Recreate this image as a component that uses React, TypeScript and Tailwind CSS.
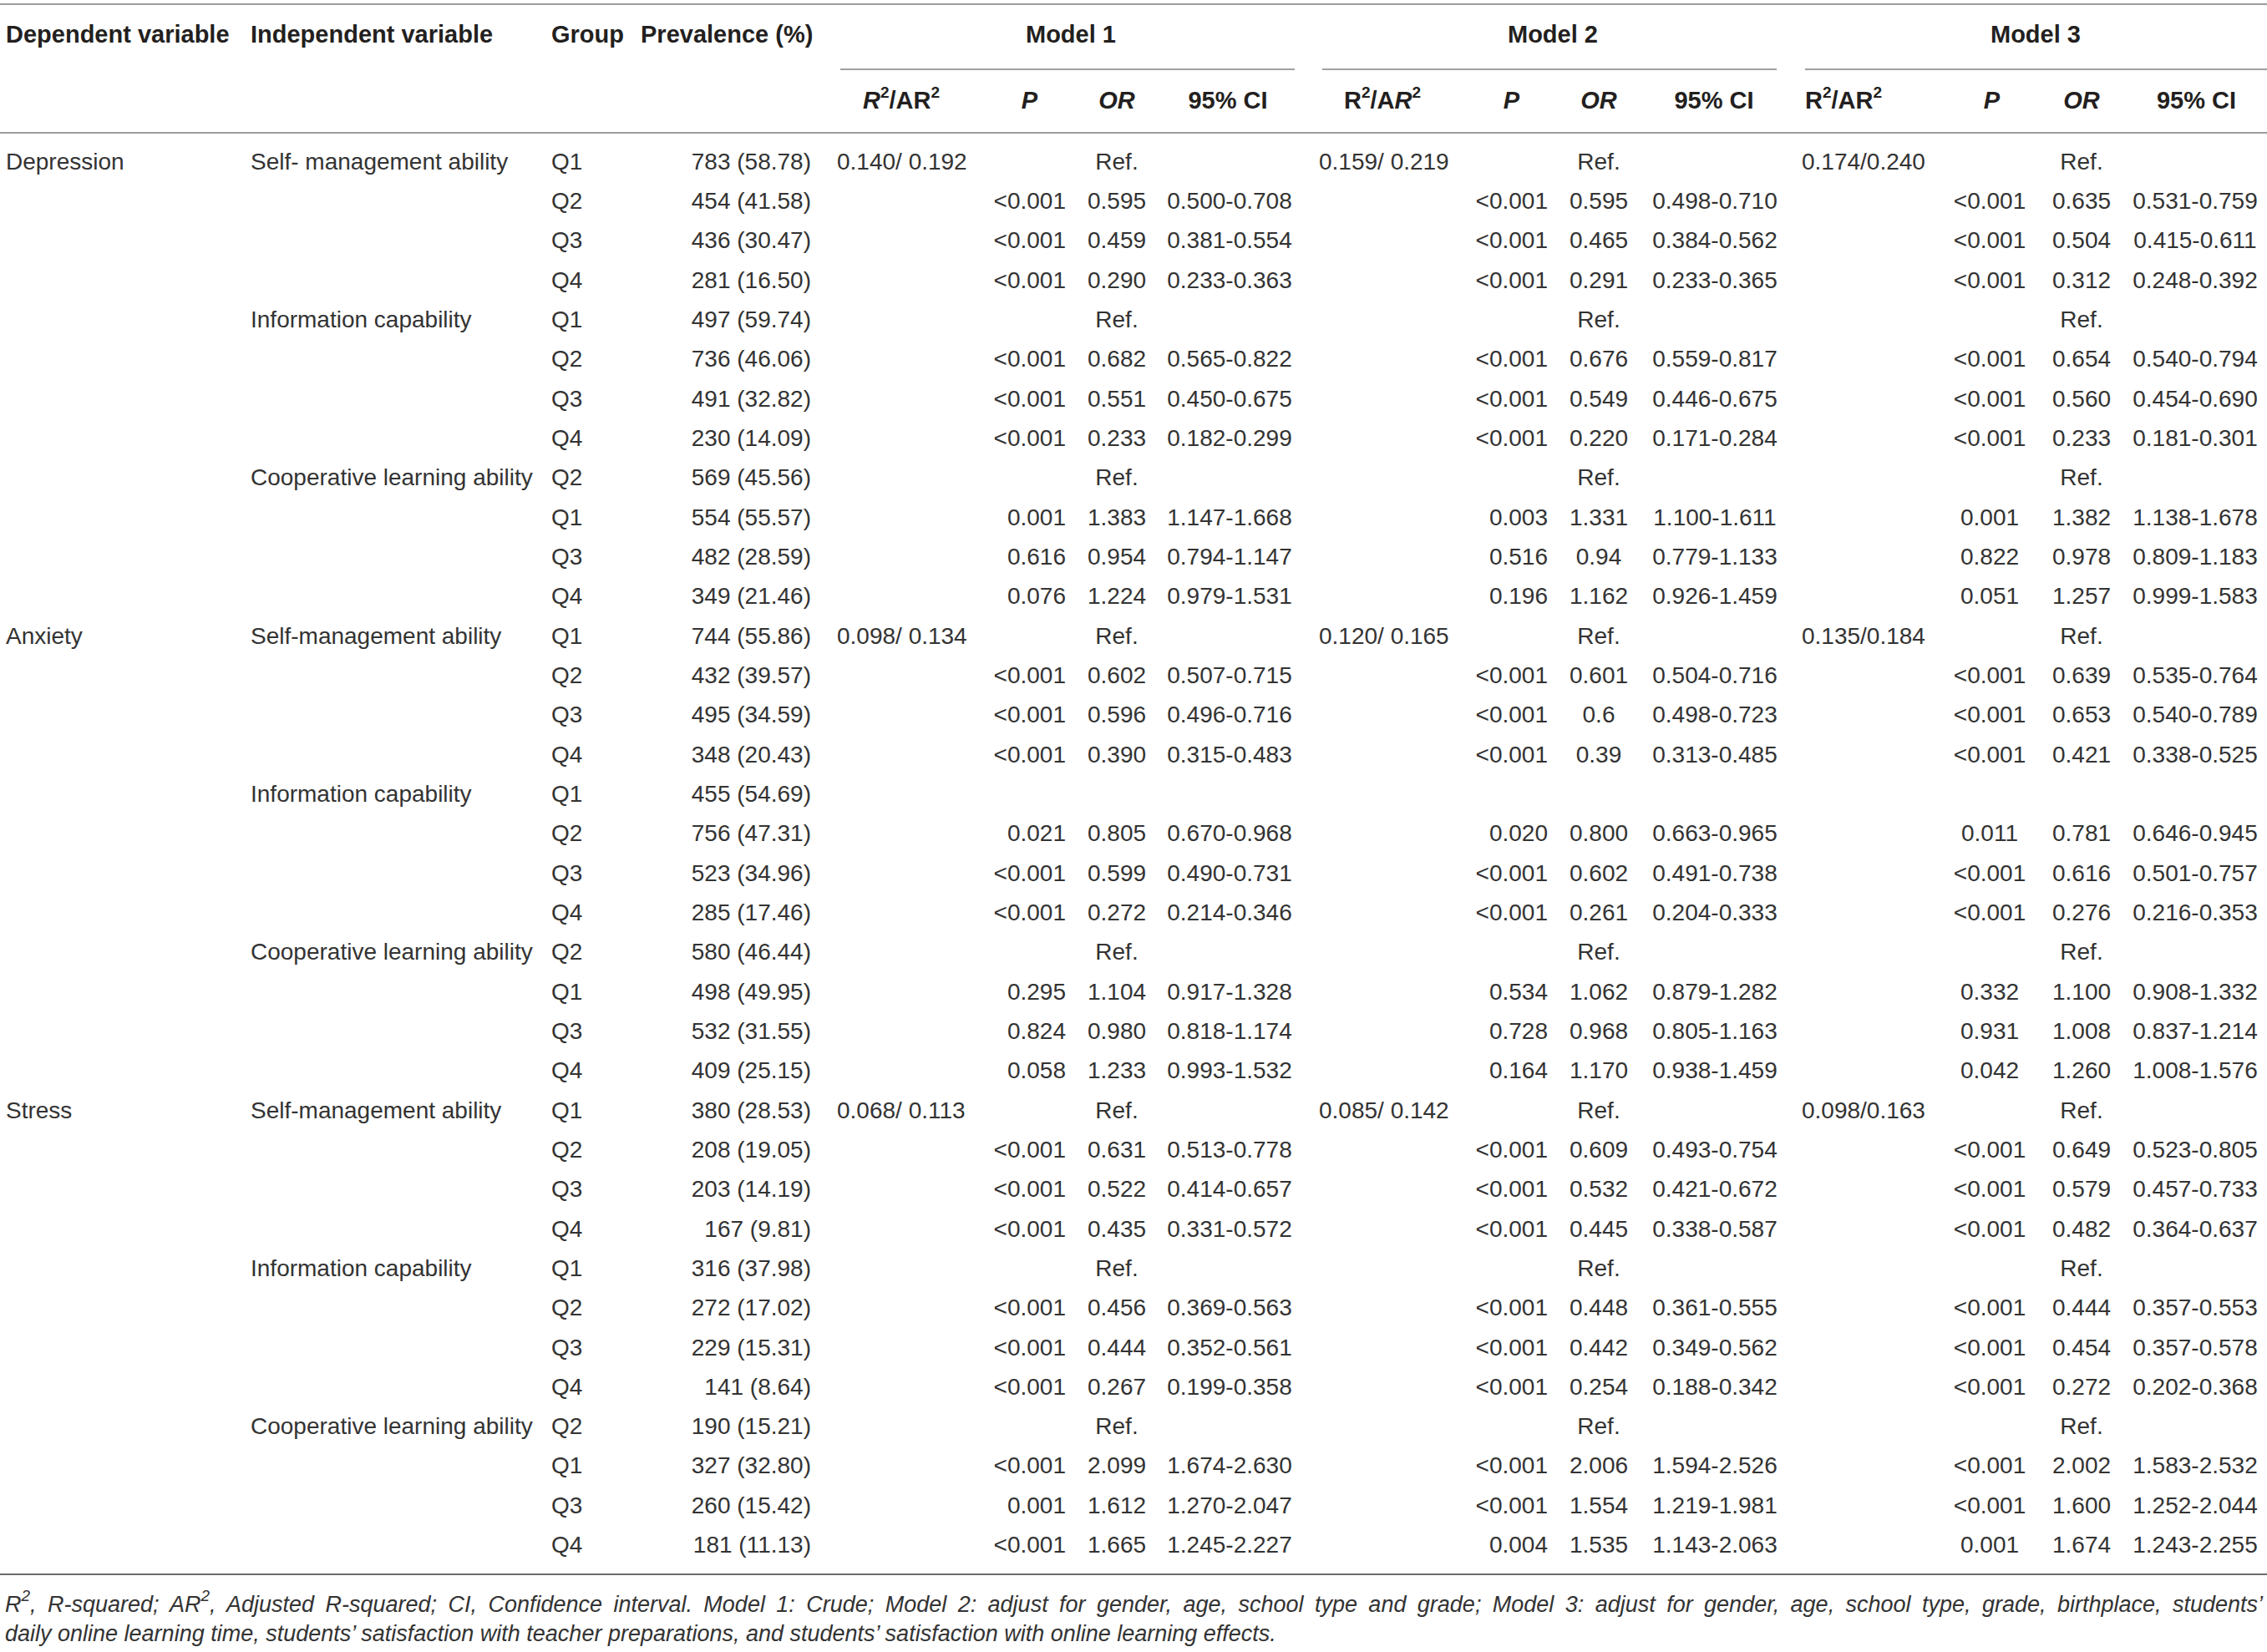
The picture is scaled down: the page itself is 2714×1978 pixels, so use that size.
import React from "react";

type M = [string, string, string, string];
type Row = { dep?: string; ind?: string; g: string; prev: string; m: [M, M, M] };

const ref = (r = ""): M => [r, "", "Ref.", ""];
const v = (p: string, o: string, c: string): M => ["", p, o, c];
const E: M = ["", "", "", ""];

const rows: Row[] = [
  { dep: "Depression", ind: "Self- management ability", g: "Q1", prev: "783 (58.78)", m: [ref("0.140/ 0.192"), ref("0.159/ 0.219"), ref("0.174/0.240")] },
  { g: "Q2", prev: "454 (41.58)", m: [v("<0.001", "0.595", "0.500-0.708"), v("<0.001", "0.595", "0.498-0.710"), v("<0.001", "0.635", "0.531-0.759")] },
  { g: "Q3", prev: "436 (30.47)", m: [v("<0.001", "0.459", "0.381-0.554"), v("<0.001", "0.465", "0.384-0.562"), v("<0.001", "0.504", "0.415-0.611")] },
  { g: "Q4", prev: "281 (16.50)", m: [v("<0.001", "0.290", "0.233-0.363"), v("<0.001", "0.291", "0.233-0.365"), v("<0.001", "0.312", "0.248-0.392")] },
  { ind: "Information capability", g: "Q1", prev: "497 (59.74)", m: [ref(), ref(), ref()] },
  { g: "Q2", prev: "736 (46.06)", m: [v("<0.001", "0.682", "0.565-0.822"), v("<0.001", "0.676", "0.559-0.817"), v("<0.001", "0.654", "0.540-0.794")] },
  { g: "Q3", prev: "491 (32.82)", m: [v("<0.001", "0.551", "0.450-0.675"), v("<0.001", "0.549", "0.446-0.675"), v("<0.001", "0.560", "0.454-0.690")] },
  { g: "Q4", prev: "230 (14.09)", m: [v("<0.001", "0.233", "0.182-0.299"), v("<0.001", "0.220", "0.171-0.284"), v("<0.001", "0.233", "0.181-0.301")] },
  { ind: "Cooperative learning ability", g: "Q2", prev: "569 (45.56)", m: [ref(), ref(), ref()] },
  { g: "Q1", prev: "554 (55.57)", m: [v("0.001", "1.383", "1.147-1.668"), v("0.003", "1.331", "1.100-1.611"), v("0.001", "1.382", "1.138-1.678")] },
  { g: "Q3", prev: "482 (28.59)", m: [v("0.616", "0.954", "0.794-1.147"), v("0.516", "0.94", "0.779-1.133"), v("0.822", "0.978", "0.809-1.183")] },
  { g: "Q4", prev: "349 (21.46)", m: [v("0.076", "1.224", "0.979-1.531"), v("0.196", "1.162", "0.926-1.459"), v("0.051", "1.257", "0.999-1.583")] },
  { dep: "Anxiety", ind: "Self-management ability", g: "Q1", prev: "744 (55.86)", m: [ref("0.098/ 0.134"), ref("0.120/ 0.165"), ref("0.135/0.184")] },
  { g: "Q2", prev: "432 (39.57)", m: [v("<0.001", "0.602", "0.507-0.715"), v("<0.001", "0.601", "0.504-0.716"), v("<0.001", "0.639", "0.535-0.764")] },
  { g: "Q3", prev: "495 (34.59)", m: [v("<0.001", "0.596", "0.496-0.716"), v("<0.001", "0.6", "0.498-0.723"), v("<0.001", "0.653", "0.540-0.789")] },
  { g: "Q4", prev: "348 (20.43)", m: [v("<0.001", "0.390", "0.315-0.483"), v("<0.001", "0.39", "0.313-0.485"), v("<0.001", "0.421", "0.338-0.525")] },
  { ind: "Information capability", g: "Q1", prev: "455 (54.69)", m: [E, E, E] },
  { g: "Q2", prev: "756 (47.31)", m: [v("0.021", "0.805", "0.670-0.968"), v("0.020", "0.800", "0.663-0.965"), v("0.011", "0.781", "0.646-0.945")] },
  { g: "Q3", prev: "523 (34.96)", m: [v("<0.001", "0.599", "0.490-0.731"), v("<0.001", "0.602", "0.491-0.738"), v("<0.001", "0.616", "0.501-0.757")] },
  { g: "Q4", prev: "285 (17.46)", m: [v("<0.001", "0.272", "0.214-0.346"), v("<0.001", "0.261", "0.204-0.333"), v("<0.001", "0.276", "0.216-0.353")] },
  { ind: "Cooperative learning ability", g: "Q2", prev: "580 (46.44)", m: [ref(), ref(), ref()] },
  { g: "Q1", prev: "498 (49.95)", m: [v("0.295", "1.104", "0.917-1.328"), v("0.534", "1.062", "0.879-1.282"), v("0.332", "1.100", "0.908-1.332")] },
  { g: "Q3", prev: "532 (31.55)", m: [v("0.824", "0.980", "0.818-1.174"), v("0.728", "0.968", "0.805-1.163"), v("0.931", "1.008", "0.837-1.214")] },
  { g: "Q4", prev: "409 (25.15)", m: [v("0.058", "1.233", "0.993-1.532"), v("0.164", "1.170", "0.938-1.459"), v("0.042", "1.260", "1.008-1.576")] },
  { dep: "Stress", ind: "Self-management ability", g: "Q1", prev: "380 (28.53)", m: [ref("0.068/ 0.113"), ref("0.085/ 0.142"), ref("0.098/0.163")] },
  { g: "Q2", prev: "208 (19.05)", m: [v("<0.001", "0.631", "0.513-0.778"), v("<0.001", "0.609", "0.493-0.754"), v("<0.001", "0.649", "0.523-0.805")] },
  { g: "Q3", prev: "203 (14.19)", m: [v("<0.001", "0.522", "0.414-0.657"), v("<0.001", "0.532", "0.421-0.672"), v("<0.001", "0.579", "0.457-0.733")] },
  { g: "Q4", prev: "167 (9.81)", m: [v("<0.001", "0.435", "0.331-0.572"), v("<0.001", "0.445", "0.338-0.587"), v("<0.001", "0.482", "0.364-0.637")] },
  { ind: "Information capability", g: "Q1", prev: "316 (37.98)", m: [ref(), ref(), ref()] },
  { g: "Q2", prev: "272 (17.02)", m: [v("<0.001", "0.456", "0.369-0.563"), v("<0.001", "0.448", "0.361-0.555"), v("<0.001", "0.444", "0.357-0.553")] },
  { g: "Q3", prev: "229 (15.31)", m: [v("<0.001", "0.444", "0.352-0.561"), v("<0.001", "0.442", "0.349-0.562"), v("<0.001", "0.454", "0.357-0.578")] },
  { g: "Q4", prev: "141 (8.64)", m: [v("<0.001", "0.267", "0.199-0.358"), v("<0.001", "0.254", "0.188-0.342"), v("<0.001", "0.272", "0.202-0.368")] },
  { ind: "Cooperative learning ability", g: "Q2", prev: "190 (15.21)", m: [ref(), ref(), ref()] },
  { g: "Q1", prev: "327 (32.80)", m: [v("<0.001", "2.099", "1.674-2.630"), v("<0.001", "2.006", "1.594-2.526"), v("<0.001", "2.002", "1.583-2.532")] },
  { g: "Q3", prev: "260 (15.42)", m: [v("0.001", "1.612", "1.270-2.047"), v("<0.001", "1.554", "1.219-1.981"), v("<0.001", "1.600", "1.252-2.044")] },
  { g: "Q4", prev: "181 (11.13)", m: [v("<0.001", "1.665", "1.245-2.227"), v("0.004", "1.535", "1.143-2.063"), v("0.001", "1.674", "1.243-2.255")] },
];

const GRID =
  "grid grid-cols-[300px_360px_105px_237px_140px_142px_106px_189px_140px_142px_106px_190px_140px_142px_106px_169px]";

const pCls = ["text-right pr-[8px]", "text-right pr-[8px]", "text-center pl-[28px]"];
const ciCls = ["text-center pr-[25px]", "text-center pr-[18px]", "text-center pr-[3px]"];

const hR2Cls = ["pl-[31px]", "pl-[30px]", "pl-[4px]"];
const hPCls = ["text-right pr-[42px]", "text-right pr-[42px]", "text-right pr-[45px]"];
const hCiCls = ["text-center pr-[29px]", "text-center pr-[20px]", "text-center pr-0"];
const modelLabelCls = ["pr-[17px]", "pr-[18px]", "pl-[3px]"];
const modelLineCls = ["ml-[4px] mr-[29px]", "ml-[4px] mr-[30px]", "ml-[4px] mr-0"];

const Sup = ({ children }: { children: React.ReactNode }) => (
  <sup className="text-[19px] relative -top-[3px] align-super leading-none">{children}</sup>
);

const r2Headers = [
  <>
    <i>R</i>
    <Sup>2</Sup>/AR<Sup>2</Sup>
  </>,
  <>
    R<Sup>2</Sup>/A<i>R</i>
    <Sup>2</Sup>
  </>,
  <>
    R<Sup>2</Sup>/AR<Sup>2</Sup>
  </>,
];

export default function App() {
  return (
    <div className="w-[2714px] min-h-[1978px] bg-white pt-[4px] font-['Liberation_Sans',Arial,sans-serif] text-[#333333]">
      {/* header */}
      <div className="border-t-2 border-b-2 border-[#9c9c9c] font-bold text-[29px] text-[#231f20]">
        <div className={`${GRID} h-[78px]`}>
          <div className="h-[72px] flex items-center pl-[7px] whitespace-nowrap">Dependent variable</div>
          <div className="h-[72px] flex items-center whitespace-nowrap">Independent variable</div>
          <div className="h-[72px] flex items-center whitespace-nowrap">Group</div>
          <div className="h-[72px] flex items-center pl-[2px] whitespace-nowrap">Prevalence (%)</div>
          {[0, 1, 2].map((i) => (
            <div key={i} className="col-span-4 flex flex-col">
              <div className={`h-[72px] flex items-center justify-center whitespace-nowrap ${modelLabelCls[i]}`}>
                Model {i + 1}
              </div>
              <div className={`mt-[4px] h-[2px] bg-[#a0a0a0] ${modelLineCls[i]}`} />
            </div>
          ))}
        </div>
        <div className={`${GRID} h-[74px] items-center`}>
          <div />
          <div />
          <div />
          <div />
          {[0, 1, 2].map((i) => (
            <React.Fragment key={i}>
              <div className={`whitespace-nowrap ${hR2Cls[i]}`}>{r2Headers[i]}</div>
              <div className={`italic ${hPCls[i]}`}>P</div>
              <div className="italic text-center">OR</div>
              <div className={`whitespace-nowrap ${hCiCls[i]}`}>95% CI</div>
            </React.Fragment>
          ))}
        </div>
      </div>

      {/* body */}
      <div className="border-b-2 border-[#6b6b6b] pt-[10px] pb-[10px] text-[28px]">
        {rows.map((r, ri) => (
          <div key={ri} className={`${GRID} h-[47.34px] items-center whitespace-nowrap`}>
            <div className="pl-[7px]">{r.dep ?? ""}</div>
            <div>{r.ind ?? ""}</div>
            <div>{r.g}</div>
            <div className="text-right pr-[31px]">{r.prev}</div>
            {r.m.map((m, mi) => (
              <React.Fragment key={mi}>
                <div className="text-left">{m[0]}</div>
                <div className={pCls[mi]}>{m[1]}</div>
                <div className="text-center">{m[2]}</div>
                <div className={ciCls[mi]}>{m[3]}</div>
              </React.Fragment>
            ))}
          </div>
        ))}
      </div>

      {/* footnote */}
      <div className="pt-[18px] pl-[6px] pr-[5px] italic text-[27px] leading-[35px] text-[#333333]">
        <p className="text-justify [text-align-last:justify] whitespace-nowrap">
          <i>R</i>
          <Sup>2</Sup>, R-squared; <i>AR</i>
          <Sup>2</Sup>, Adjusted R-squared; <i>CI</i>, Confidence interval. Model 1: Crude; Model 2: adjust for
          gender, age, school type and grade; Model 3: adjust for gender, age, school type, grade, birthplace,
          students’
        </p>
        <p className="whitespace-nowrap">
          daily online learning time, students’ satisfaction with teacher preparations, and students’ satisfaction with
          online learning effects.
        </p>
      </div>
    </div>
  );
}
